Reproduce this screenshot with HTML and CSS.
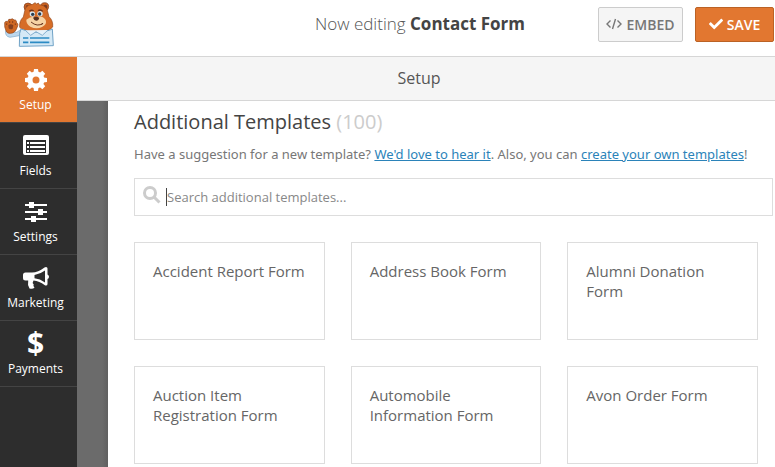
FILE: index.html
```html
<!DOCTYPE html>
<html lang="en">
<head>
    <meta charset="UTF-8">
    <meta name="viewport" content="width=device-width, initial-scale=1.0">
    <title>Contact Form - Form Builder</title>
    <link rel="stylesheet" href="styles.css">
</head>
<body>
    <header class="toolbar">
        <svg class="logo" viewBox="0 0 165 141" aria-hidden="true">
            <!-- ears -->
            <circle cx="84" cy="18" r="12" fill="#c9611f" stroke="#7b3a1c" stroke-width="2"/>
            <circle cx="134" cy="17" r="12" fill="#c9611f" stroke="#7b3a1c" stroke-width="2"/>
            <circle cx="83" cy="18" r="6" fill="#7d3b20"/>
            <circle cx="136" cy="17" r="6" fill="#7d3b20"/>
            <!-- raised paw -->
            <path d="M17 89 Q14 106 30 109 L58 104 L62 86 L50 94 Z" fill="#bcd8ee" stroke="#7fa9c9" stroke-width="2"/>
            <path d="M19 92 Q12 78 14 65 Q17 58 23 62 Q25 52 32 55 Q38 51 42 57 Q50 55 50 66 Q57 68 51 80 Q46 96 32 97 Q23 98 19 92 Z" fill="#cf6824" stroke="#8b421d" stroke-width="2"/>
            <path d="M25 73 Q32 66 40 73 L38 83 Q31 87 26 82 Z" fill="#86401f"/>
            <path d="M20 67 v5 M29 60 v6 M38 60 v6 M46 67 v5" stroke="#8b421d" stroke-width="3"/>
            <!-- head -->
            <path d="M76 22 Q84 10 98 10 L105 5 L110 9 L115 6 L118 11 Q133 12 141 25 L147 47 Q160 59 158 78 Q150 91 110 91 Q66 91 59 79 Q57 60 70 48 Z" fill="#d66d27" stroke="#934619" stroke-width="2"/>
            <path d="M79 56 Q92 45 108 48 Q128 43 137 57 Q142 70 126 78 Q109 86 91 77 Q78 68 79 56 Z" fill="#f6d3a4"/>
            <circle cx="97" cy="39" r="8" fill="#d8e7ef"/>
            <circle cx="120" cy="38" r="8" fill="#d8e7ef"/>
            <circle cx="98" cy="40" r="5" fill="#283c4e"/>
            <circle cx="119" cy="39" r="5" fill="#283c4e"/>
            <path d="M88 31 Q95 25 101 30 M114 29 Q122 24 128 31" fill="none" stroke="#6d341b" stroke-width="4"/>
            <path d="M99 50 Q108 45 118 50 Q116 59 109 59 Q102 59 99 50 Z" fill="#56301f"/>
            <path d="M93 63 Q112 79 129 67 M124 72 l5 -6" fill="none" stroke="#683722" stroke-width="3"/>
            <!-- shirt -->
            <path d="M63 84 Q76 88 84 91 L108 94 L134 91 Q151 88 157 84 L160 134 L58 136 L59 97 Z" fill="#d5e9f6" stroke="#70a3c7" stroke-width="3"/>
            <path d="M76 88 L92 103 L108 92 L127 103 L144 87" fill="#e7f2fa" stroke="#83afcf" stroke-width="3"/>
            <path d="M69 111 h16 M69 124 h16" stroke="#2c8bc4" stroke-width="5"/>
            <path d="M90 111 h58 M90 124 h58" stroke="#2c8bc4" stroke-width="5"/>
        </svg>
        <h1 class="form-name">Now editing <strong>Contact Form</strong></h1>
        <div class="actions">
            <button type="button" class="btn btn-embed">
                <svg class="icon-code" viewBox="0 0 16 12" aria-hidden="true"><path d="M4.5 2.5 1 6l3.500 3.500M11.500 2.500 15 6l-3.500 3.500M9.500 1 6.500 11"/></svg>
                EMBED
            </button>
            <button type="button" class="btn btn-save">
                <svg class="icon-check" viewBox="0 0 512 512" aria-hidden="true"><path d="M173.898 439.404l-166.4-166.4c-9.997-9.997-9.997-26.206 0-36.204l36.203-36.204c9.997-9.998 26.207-9.998 36.204 0L192 312.69 432.095 72.596c9.997-9.997 26.207-9.997 36.204 0l36.203 36.204c9.997 9.997 9.997 26.206 0 36.204l-294.4 294.401c-9.998 9.997-26.207 9.997-36.204-.001z"/></svg>
                SAVE
            </button>
        </div>
    </header>

    <div class="builder">
        <nav class="sidebar">
            <button type="button" class="tab active">
                <svg class="tab-icon" viewBox="0 0 26 24" aria-hidden="true">
                    <circle cx="13" cy="12" r="6" fill="none" stroke="currentColor" stroke-width="5"/>
                    <g fill="currentColor">
                        <path id="tooth" d="M10.500 4.500 11 1h4l.5 3.500z"/>
                        <use href="#tooth" transform="rotate(45 13 12)"/>
                        <use href="#tooth" transform="rotate(90 13 12)"/>
                        <use href="#tooth" transform="rotate(135 13 12)"/>
                        <use href="#tooth" transform="rotate(180 13 12)"/>
                        <use href="#tooth" transform="rotate(225 13 12)"/>
                        <use href="#tooth" transform="rotate(270 13 12)"/>
                        <use href="#tooth" transform="rotate(315 13 12)"/>
                    </g>
                </svg>
                Setup
            </button>
            <button type="button" class="tab">
                <svg class="tab-icon" viewBox="0 0 26 24" aria-hidden="true">
                    <path fill="currentColor" fill-rule="evenodd" d="M2 1h22a2 2 0 0 1 2 2v16a2 2 0 0 1-2 2H2a2 2 0 0 1-2-2V3a2 2 0 0 1 2-2zM3 6v13h20V6z"/>
                    <path stroke="currentColor" stroke-width="2" d="M4 9h2M7 9h15M4 13h2M7 13h15M4 17h2M7 17h15"/>
                </svg>
                Fields
            </button>
            <button type="button" class="tab">
                <svg class="tab-icon" viewBox="0 0 26 24" aria-hidden="true">
                    <path stroke="currentColor" stroke-width="2" d="M2 5h22M2 12h22M2 19h22"/>
                    <path fill="currentColor" d="M6 2h5v6H6zM15 9h5v6h-5zM8 16h5v6H8z"/>
                </svg>
                Settings
            </button>
            <button type="button" class="tab">
                <svg class="tab-icon" viewBox="0 0 26 24" aria-hidden="true">
                    <path fill="currentColor" fill-rule="evenodd" d="M23 1q1.500 0 1.500 1.500v6q1.500.7 1.500 2.300t-1.500 2.300v5q0 1.500-1.500 1.500-.8 0-1.500-.5Q16.500 15 10.500 14.500q-1.500 2 .2 4-1 1.500.8 3-1.500 2-5 1-2.200-4-1.300-8H2.500Q0 14.500 0 12V9q0-2.500 2.500-2.500H9q6 0 12.500-5Q22.200 1 23 1zm-1 3.500q-5 3.800-10.500 4.400v3.300q5.500.6 10.500 4.300z"/>
                </svg>
                Marketing
            </button>
            <button type="button" class="tab">
                <span class="tab-icon dollar" aria-hidden="true">$</span>
                Payments
            </button>
        </nav>

        <main class="panel">
            <h2 class="panel-title">Setup</h2>
            <div class="panel-body">
                <section class="templates">
                    <h3 class="templates-title">Additional Templates <span class="count">(100)</span></h3>
                    <p class="templates-desc">Have a suggestion for a new template? <a href="#suggest">We'd love to hear it</a>. Also, you can <a href="#create">create your own templates</a>!</p>

                    <div class="search">
                        <svg class="search-icon" viewBox="0 0 18 18" aria-hidden="true"><circle cx="7" cy="7" r="5.500"/><path d="m11 11 5.500 5.500"/></svg>
                        <input type="text" class="search-input" placeholder="Search additional templates..." aria-label="Search additional templates" autofocus>
                    </div>

                    <div class="template-list">
                        <div class="template">Accident Report Form</div>
                        <div class="template">Address Book Form</div>
                        <div class="template">Alumni Donation Form</div>
                        <div class="template">Auction Item Registration Form</div>
                        <div class="template">Automobile Information Form</div>
                        <div class="template">Avon Order Form</div>
                    </div>
                </section>
            </div>
        </main>
    </div>
</body>
</html>
```
FILE: styles.css
```css
* {
    box-sizing: border-box;
}

body {
    display: flex;
    flex-direction: column;
    height: 100vh;
    margin: 0;
    overflow: hidden;
    font-family: "Segoe UI", "Open Sans", "Noto Sans", sans-serif;
    font-size: 13px;
    color: #777;
    background-color: #fff;
}

button {
    font-family: inherit;
    cursor: pointer;
}

/* Top toolbar */
.toolbar {
    display: grid;
    grid-template-columns: 1fr auto 1fr;
    align-items: center;
    flex-shrink: 0;
    height: 57px;
    padding: 0 1px 8px 0;
    border-bottom: 1px solid #d6d6d6;
}

.logo {
    width: 55px;
    height: 47px;
}

.form-name {
    margin: 0 0 0 66px;
    font-size: 17px;
    font-weight: 300;
    line-height: 24px;
    color: #555;
}

.form-name strong {
    font-weight: 700;
    color: #444;
}

.actions {
    display: flex;
    justify-content: flex-end;
    gap: 12px;
}

.btn {
    display: flex;
    align-items: center;
    justify-content: center;
    gap: 4px;
    height: 35px;
    padding: 0;
    border: 1px solid #ccc;
    border-radius: 2px;
    font-size: 14px;
    font-weight: 600;
}

.btn-embed {
    width: 85px;
    color: #777;
    background-color: #f5f5f5;
}

.btn-save {
    width: 79px;
    border-color: #bb6225;
    color: #fff;
    background-color: #e27730;
}

.icon-code {
    width: 16px;
    height: 12px;
    fill: none;
    stroke: currentColor;
    stroke-width: 1.4;
}

.icon-check {
    width: 14px;
    height: 14px;
    fill: currentColor;
}

/* Sidebar */
.builder {
    display: flex;
    flex: 1;
    min-height: 0;
}

.sidebar {
    flex-shrink: 0;
    width: 77px;
    background-color: #2d2d2d;
}

.tab {
    display: flex;
    flex-direction: column;
    align-items: center;
    width: 100%;
    height: 66px;
    padding: 11px 6px 0 0;
    border: 0;
    border-bottom: 1px solid #444;
    font-size: 12px;
    font-weight: 400;
    line-height: 20px;
    color: #fff;
    background-color: transparent;
}

.tab.active {
    background-color: #e27730;
}

.tab-icon {
    width: 26px;
    height: 24px;
    margin-bottom: 3px;
}

.dollar {
    font-size: 30px;
    font-weight: 700;
    line-height: 22px;
}

/* Panel */
.panel {
    display: flex;
    flex-direction: column;
    flex: 1;
    min-width: 0;
}

.panel-title {
    flex-shrink: 0;
    margin: 0;
    padding-right: 14px;
    border-bottom: 1px solid #d6d6d6;
    font-size: 16px;
    font-weight: 400;
    line-height: 43px;
    text-align: center;
    color: #555;
    background-color: #f5f5f5;
}

.panel-body {
    flex: 1;
    min-height: 0;
    padding-left: 31px;
    background: linear-gradient(to right, #6b6b6b 25px, #606060 31px);
}

.templates {
    height: 100%;
    padding: 7px 2px 0 26px;
    overflow: hidden;
    background-color: #fff;
}

.templates-title {
    margin: 0 0 8px;
    font-size: 20px;
    font-weight: 400;
    line-height: 28px;
    color: #444;
}

.count {
    color: #ccc;
}

.templates-desc {
    margin: 0 0 14px;
    font-family: "Segoe UI", "Noto Sans", sans-serif;
    font-size: 13px;
    line-height: 20px;
    white-space: nowrap;
}

.templates-desc a {
    color: #2b83b9;
}

.search {
    display: flex;
    align-items: center;
    height: 38px;
    padding-left: 8px;
    border: 1px solid #ddd;
}

.search-icon {
    width: 18px;
    height: 18px;
    margin: 0 5px 4px 0;
    fill: none;
    stroke: #ccc;
    stroke-width: 3;
}

.search-input {
    flex: 1;
    min-width: 0;
    height: 18px;
    padding: 0;
    border: 0;
    border-left: 1px solid #444;
    outline: 0;
    font-family: inherit;
    font-size: 13px;
    color: #444;
    caret-color: transparent;
    background-color: transparent;
}

.search-input::placeholder {
    color: #888;
}

.template-list {
    display: grid;
    grid-template-columns: repeat(3, 1fr);
    gap: 26px;
    padding: 26px 15px 0 0;
}

.template {
    min-height: 98px;
    padding: 18px;
    border: 1px solid #ddd;
    font-size: 15px;
    line-height: 20px;
    color: #666;
}
```
